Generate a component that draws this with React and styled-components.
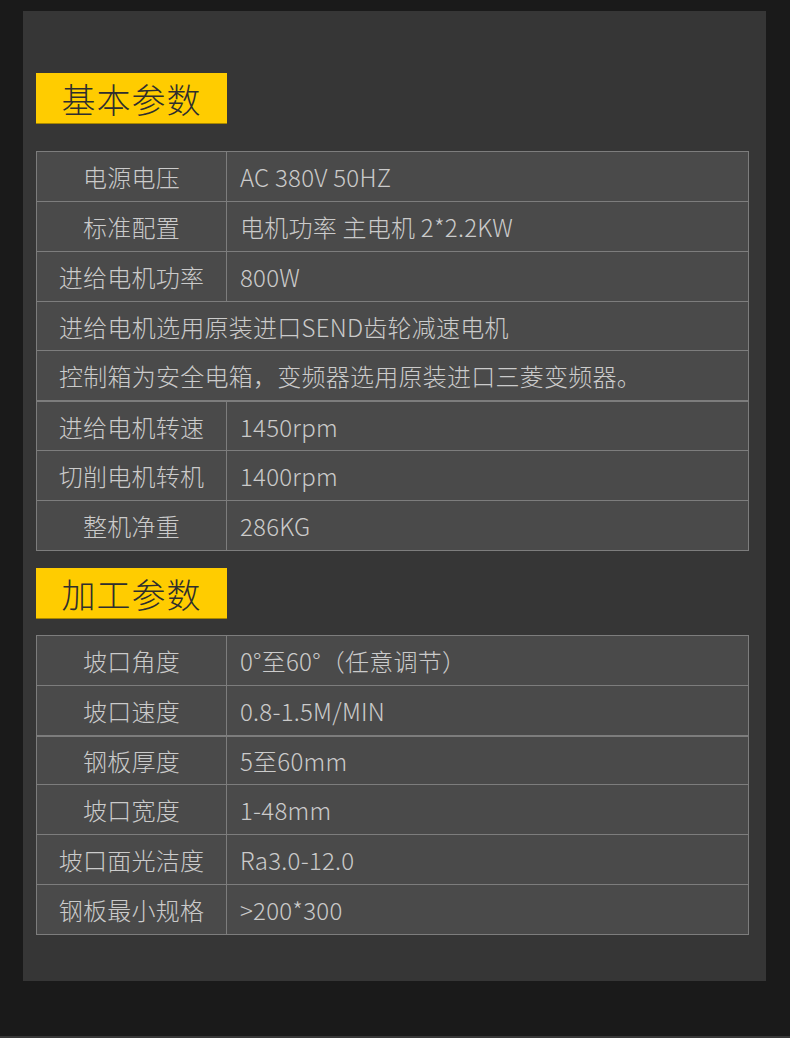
import React from 'react'
import styled, { createGlobalStyle } from 'styled-components'

const GlobalStyle = createGlobalStyle`
  html, body {
    margin: 0;
    padding: 0;
    background: #1a1a1a;
  }
  body {
    font-family: "Noto Sans CJK SC", "Noto Sans", sans-serif;
  }
`

const Page = styled.div`
  width: 790px;
  height: 1038px;
  padding: 11px 0 0 23px;
  box-sizing: border-box;
  background: #1a1a1a;
  border-bottom: 2px solid #383838;
`

const Panel = styled.div`
  width: 743px;
  height: 970px;
  box-sizing: border-box;
  background: #363636;
  padding: 62px 17px 0 13px;
  display: flex;
  flex-direction: column;
`

const SectionTitle = styled.div`
  width: 191px;
  height: 51px;
  box-sizing: border-box;
  background: #ffcc00;
  border-bottom: 1px solid #a88700;
  color: #2e2e2e;
  font-size: 34px;
  font-weight: 300;
  display: flex;
  align-items: center;
  justify-content: center;
  letter-spacing: 1px;
  margin-top: ${(p) => p.$top || 0}px;
`

const Table = styled.div`
  margin-top: ${(p) => p.$top}px;
  border: 1px solid #7d7d7d;
  background: #4a4a4a;
  color: #cbcbcb;
  font-size: 24px;
  font-weight: 300;
  letter-spacing: 0.25px;
`

const Row = styled.div`
  display: grid;
  grid-template-columns: ${(p) => (p.$wide ? '1fr' : '190px 1fr')};
  height: ${(p) => p.$h}px;
  border-top: ${(p) => (p.$first ? 'none' : `${p.$thick ? 2 : 1}px solid #7d7d7d`)};
`

const Label = styled.div`
  display: flex;
  align-items: center;
  justify-content: center;
  border-right: 1px solid #7d7d7d;
`

const Value = styled.div`
  display: flex;
  align-items: center;
  padding-left: ${(p) => (p.$wide ? 22 : 13)}px;
  white-space: nowrap;
`

const basic = [
  ['电源电压', 'AC 380V 50HZ', 49],
  ['标准配置', '电机功率 主电机 2*2.2KW', 49],
  ['进给电机功率', '800W', 49],
  [null, '进给电机选用原装进口SEND齿轮减速电机', 48],
  [null, '控制箱为安全电箱，变频器选用原装进口三菱变频器。', 49],
  ['进给电机转速', '1450rpm', 48, true],
  ['切削电机转机', '1400rpm', 49],
  ['整机净重', '286KG', 49],
]

const process = [
  ['坡口角度', '0°至60°（任意调节）', 49],
  ['坡口速度', '0.8-1.5M/MIN', 49],
  ['钢板厚度', '5至60mm', 47, true],
  ['坡口宽度', '1-48mm', 49],
  ['坡口面光洁度', 'Ra3.0-12.0', 49],
  ['钢板最小规格', '>200*300', 49],
]

const SpecTable = ({ rows, top }) => (
  <Table $top={top}>
    {rows.map(([label, value, h, thick], i) => (
      <Row key={i} $first={i === 0} $wide={!label} $thick={thick} $h={h}>
        {label && <Label>{label}</Label>}
        <Value $wide={!label}>{value}</Value>
      </Row>
    ))}
  </Table>
)

export default function App() {
  return (
    <Page>
      <GlobalStyle />
      <Panel>
        <SectionTitle>基本参数</SectionTitle>
        <SpecTable rows={basic} top={27} />
        <SectionTitle $top={17}>加工参数</SectionTitle>
        <SpecTable rows={process} top={16} />
      </Panel>
    </Page>
  )
}
